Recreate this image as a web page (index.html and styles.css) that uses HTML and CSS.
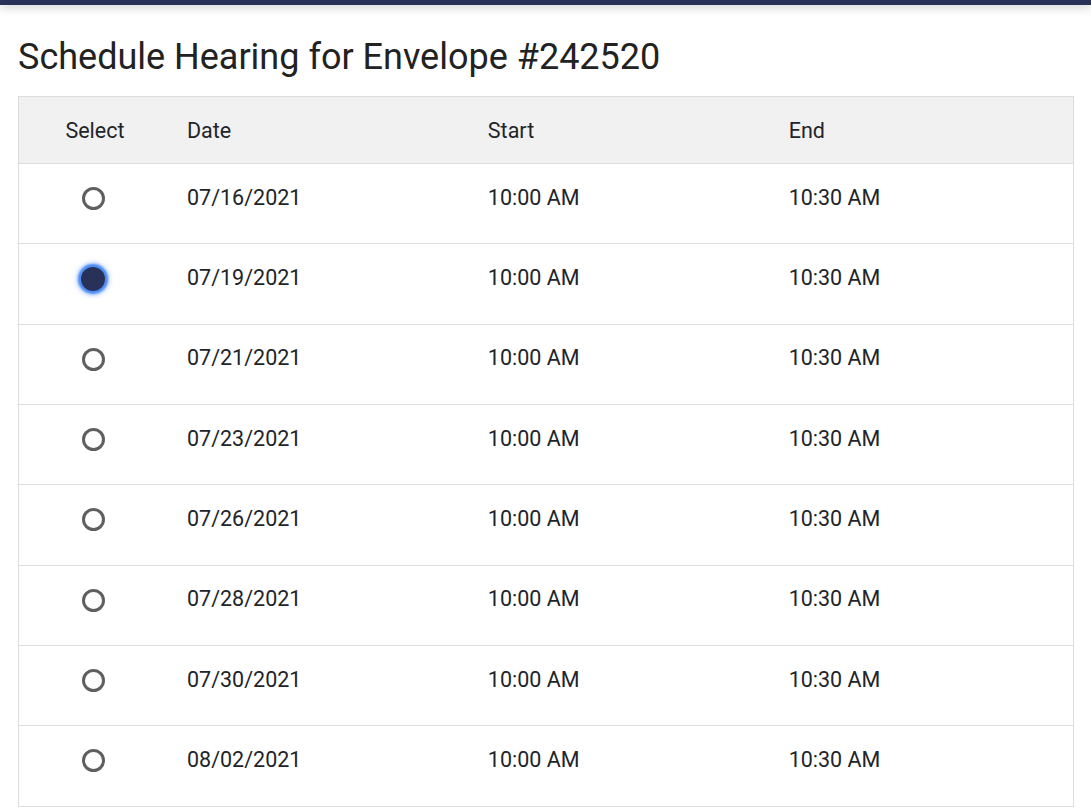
FILE: index.html
```html
<!DOCTYPE html>
<html>
<head>
<meta charset="utf-8">
<link rel="stylesheet" href="styles.css">
</head>
<body>
<div class="topbar"></div>
<main class="content">
  <h1 class="title">Schedule Hearing for Envelope #242520</h1>
  <table class="grid">
    <thead>
      <tr>
        <th class="col-select">Select</th>
        <th>Date</th>
        <th>Start</th>
        <th>End</th>
      </tr>
    </thead>
    <tbody>
      <tr><td class="col-select"><span class="radio"></span></td><td>07/16/2021</td><td>10:00 AM</td><td>10:30 AM</td></tr>
      <tr><td class="col-select"><span class="radio checked"></span></td><td>07/19/2021</td><td>10:00 AM</td><td>10:30 AM</td></tr>
      <tr><td class="col-select"><span class="radio"></span></td><td>07/21/2021</td><td>10:00 AM</td><td>10:30 AM</td></tr>
      <tr><td class="col-select"><span class="radio"></span></td><td>07/23/2021</td><td>10:00 AM</td><td>10:30 AM</td></tr>
      <tr><td class="col-select"><span class="radio"></span></td><td>07/26/2021</td><td>10:00 AM</td><td>10:30 AM</td></tr>
      <tr><td class="col-select"><span class="radio"></span></td><td>07/28/2021</td><td>10:00 AM</td><td>10:30 AM</td></tr>
      <tr><td class="col-select"><span class="radio"></span></td><td>07/30/2021</td><td>10:00 AM</td><td>10:30 AM</td></tr>
      <tr><td class="col-select"><span class="radio"></span></td><td>08/02/2021</td><td>10:00 AM</td><td>10:30 AM</td></tr>
    </tbody>
  </table>
</main>
</body>
</html>
```

FILE: styles.css
```css
html, body {
  margin: 0;
  padding: 0;
  background: #ffffff;
  font-family: Roboto, "Liberation Sans", sans-serif;
  color: #212529;
  overflow: hidden;
}
.topbar {
  height: 5px;
  background: #283157;
  box-shadow: 0 2px 10px rgba(0, 0, 0, 0.25);
}
.content {
  padding: 0 17px 0 18px;
}
.title {
  margin: 0;
  padding-top: 32px;
  padding-bottom: 19px;
  font-size: 36px;
  line-height: 40px;
  font-weight: 400;
  color: #222222;
}
.grid {
  width: 100%;
  border-collapse: collapse;
  border: 1px solid #dddddd;
  table-layout: fixed;
  font-size: 21.5px;
}
.grid thead tr {
  height: 67px;
}
.grid tbody tr {
  height: 80.33px;
}
.grid th {
  background: #f1f1f1;
  font-weight: 400;
  text-align: left;
  padding: 0 0 0 16px;
  border-bottom: 1px solid #dddddd;
  color: #212529;
}
.grid td {
  padding: 0 0 13px 16px;
  border-bottom: 1px solid #dddddd;
  color: #212529;
}
.grid .col-select {
  width: 152px;
  text-align: center;
  padding-left: 0;
}
.radio {
  display: inline-block;
  width: 17px;
  height: 17px;
  margin-right: 4px;
  border: 3px solid #5f5f5f;
  border-radius: 50%;
  vertical-align: middle;
  box-sizing: content-box;
}
.radio.checked {
  width: 24px;
  height: 24px;
  border: 0;
  background: #283157;
  box-shadow: 0 0 2px 3px #4c8cf5, 0 0 5px 4px rgba(76, 140, 245, 0.5);
}
```
